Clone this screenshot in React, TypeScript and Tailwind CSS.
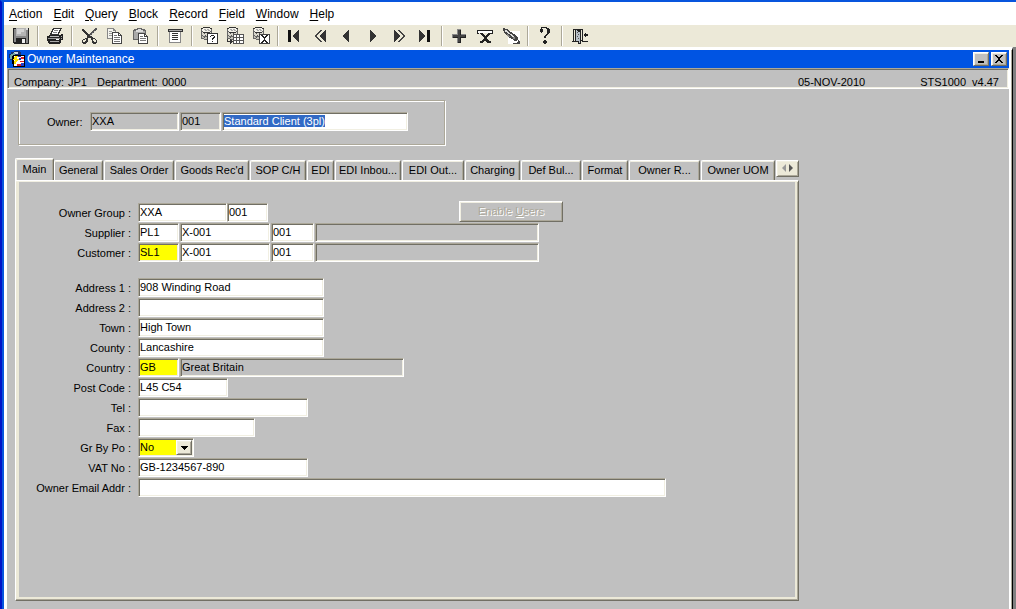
import { useEffect, useRef } from "react";
import type { ReactNode } from "react";
import clsx from "clsx";

const SUNKEN =
  "border border-t-[#aca899] border-l-[#aca899] border-r-white border-b-white shadow-[inset_1px_1px_0_#716f64,inset_-1px_-1px_0_#f1efe2]";
const RAISED =
  "border border-t-white border-l-white border-r-[#716f64] border-b-[#716f64] shadow-[inset_1px_1px_0_#f1efe2,inset_-1px_-1px_0_#aca899]";

const MENUS = ["Action", "Edit", "Query", "Block", "Record", "Field", "Window", "Help"];

const TABS = [
  { label: "General", width: "w-[49px]" },
  { label: "Sales Order", width: "w-[70px]" },
  { label: "Goods Rec'd", width: "w-[74px]" },
  { label: "SOP C/H", width: "w-[56px]" },
  { label: "EDI", width: "w-[27px]" },
  { label: "EDI Inbou...", width: "w-[66px]" },
  { label: "EDI Out...", width: "w-[62px]" },
  { label: "Charging", width: "w-[55px]" },
  { label: "Def Bul...", width: "w-[60px]" },
  { label: "Format", width: "w-[46px]" },
  { label: "Owner R...", width: "w-[71px]" },
  { label: "Owner UOM", width: "w-[74px]" },
];

function Icon({ children }: { children: ReactNode }) {
  return (
    <svg width="18" height="18" viewBox="0 0 18 18" shapeRendering="crispEdges" aria-hidden="true">
      {children}
    </svg>
  );
}

const database = (
  <>
    <path d="M3 0h7v1h2v11H10v1H4v-1H1V1h2z" fill="#666" />
    <path d="M3 1h7v1h1v2h-1v1H3V4H2V2h1z" fill="#f4f2ea" />
    <path d="M4 2h2v1H4zM7 2h2v1H7zM5 3h2v1H5zM8 3h2v1H8z" fill="#aaa" />
    <path d="M2 5h1v1h7V5h1v3h-1v1H3V8H2z" fill="#d8d6cc" />
    <path d="M2 9h1v1h7V9h1v2h-1v1H4v-1H2z" fill="#c4c2b8" />
    <path d="M4 6h1v1H4zM7 6h1v1H7zM9 7h1v1H9zM5 8h1v1H5zM4 10h1v1H4z" fill="#555" />
    <path d="M3 0h7v1H3zM1 1h2v1H1zM10 1h2v1h-2zM3 5h7v1H3z" fill="#333" />
  </>
);

const icons: Record<string, ReactNode> = {
  save: (
    <>
      <path d="M1 1h16v16H2v-1H1z" fill="#222" />
      <path d="M2 2h2v13H2zM14 3h2v13h-2z" fill="#888" />
      <path d="M4 9h10v2H4z" fill="#888" />
      <path d="M4 1h10v8H4z" fill="#b4b4b4" />
      <path d="M5 2h7v3H5zM5 5h4v2H5z" fill="#d4d4d4" />
      <path d="M14 1h2v2h-2z" fill="#ddd" />
      <path d="M4 11h10v5H4z" fill="#222" />
      <path d="M10 12h3v4h-3z" fill="#eee" />
    </>
  ),
  print: (
    <>
      <path d="M7 1h9v1h-1v2h-1v2h-1v2H4V6h1V4h1V2h1z" fill="#333" />
      <path d="M8 2h6v1h-1v2h-1v2H6V5h1V3h1z" fill="#fff" />
      <path d="M8 3h4v1H8zM7 5h4v1H7z" fill="#888" />
      <path d="M3 8h12V7h2v6h-2v3h-1v1H3v-1H2v-2H1V9h2z" fill="#222" />
      <path d="M4 9h9v1H4z" fill="#bbb" />
      <path d="M2 11h12v1H2z" fill="#999" />
      <path d="M4 14h9v1H4z" fill="#aaa" />
      <path d="M10 12h3v1h-3z" fill="#fff" />
      <path d="M15 9h1v1h-1zM15 11h1v1h-1z" fill="#aaa" />
    </>
  ),
  cut: (
    <>
      <path d="M15 1h2v2h-1v1h-1v1h-1v1h-1v1h-1v1h-1v1h-1v1H8V8h1V7h1V6h1V5h1V4h1V3h1V2h1z" fill="#555" />
      <path d="M14 4h1v1h-1zM12 6h1v1h-1zM10 8h1v1h-1z" fill="#ccc" />
      <path d="M2 2h2v1h1v1h1v1h1v1h1v1h1v1h1v1h2v1h1v1h2v1h1v1h1v3h-1v1h-3v-1h-1v-3h-1v-2H9V9H7V8H6V7H5V6H4V5H3V4H2z" fill="#333" />
      <path d="M13 12h2v1h1v2h-2v-1h-1z" fill="#ece9d8" />
      <path d="M7 9h2v2H8v4H7v1H6v1H3v-1H2v-3h1v-1h2v-1h2z" fill="#333" />
      <path d="M4 13h1v-1h1v2H5v1H3v-2h1z" fill="#ece9d8" />
    </>
  ),
  copy: (
    <>
      <path d="M1 1h7v1h1v1h1v9H1z" fill="#888" />
      <path d="M2 2h5v2h2v7H2z" fill="#f4f4ee" />
      <path d="M3 4h3v1H3zM3 6h4v1H3zM3 8h4v1H3z" fill="#999" />
      <path d="M6 5h7v1h1v1h1v1h1v9H6z" fill="#444" />
      <path d="M7 6h5v3h3v7H7z" fill="#fff" />
      <path d="M13 7h1v1h-1z" fill="#fff" />
      <path d="M8 8h3v1H8zM8 10h6v1H8zM8 12h6v1H8zM8 14h6v1H8z" fill="#777" />
    </>
  ),
  paste: (
    <>
      <path d="M5 1h5v1h3v1h1v10H1V3h1V2h3z" fill="#666" />
      <path d="M2 4h11v8H2z" fill="#aaa" />
      <path d="M4 3h7v2H4zM6 2h3v1H6z" fill="#ddd" />
      <path d="M6 6h7v1h1v1h1v1h1v8H6z" fill="#444" />
      <path d="M7 7h5v3h3v6H7z" fill="#fff" />
      <path d="M13 8h1v1h-1z" fill="#fff" />
      <path d="M8 9h3v1H8zM8 11h6v1H8zM8 13h6v1H8z" fill="#777" />
    </>
  ),
  list: (
    <>
      <path d="M2 2h15v3H2z" fill="#333" />
      <path d="M3 3h13v1H3z" fill="#aaa" />
      <path d="M3 5h12v11H3z" fill="#888" />
      <path d="M4 5h10v10H4z" fill="#fff" />
      <path d="M6 6h6v1H6zM6 8h6v1H6zM6 10h6v1H6zM6 12h6v1H6z" fill="#333" />
    </>
  ),
  enterQuery: (
    <>
      {database}
      <path d="M7 6h11v11H7z" fill="#333" />
      <path d="M8 7h9v9H8z" fill="#fff" />
      <path d="M11 8h3v1h1v2h-1v1h-1v1h-1v-2h1v-1h1V9h-3v1h-1V9h1zM12 14h1v1h-1z" fill="#222" />
    </>
  ),
  executeQuery: (
    <>
      {database}
      <path d="M7 7h11v10H7z" fill="#555" />
      <path d="M8 8h2v2H8zM11 8h2v2h-2zM14 8h3v2h-3zM8 11h2v2H8zM11 11h2v2h-2zM14 11h3v2h-3zM8 14h2v2H8zM11 14h2v2h-2zM14 14h3v2h-3z" fill="#fff" />
      <path d="M1 12h1v2h2v-2h1v1h1v1h1v1H6v1H5v1H4v-2H1z" fill="#333" />
    </>
  ),
  cancelQuery: (
    <>
      {database}
      <path d="M7 7h11v10H7z" fill="#444" />
      <path d="M8 8h9v8H8z" fill="#fff" />
      <path d="M9 8h2v1h1v1h1V9h1V8h2v1h-1v1h-1v1h-1v2h1v1h1v1h1v1h-2v-1h-1v-1h-1v1h-1v1H9v-1h1v-1h1v-1h1v-2h-1v-1h-1V9H9z" fill="#222" />
    </>
  ),
  first: (
    <>
      <path d="M2 3h3v12H2z" fill="#111" />
      <path d="M12 3h1v12h-1v-1h-1v-1h-1v-1H9v-1H8v-1H7V8h1V7h1V6h1V5h1V4h1z" fill="#333" />
    </>
  ),
  previousSet: (
    <>
      <path d="M8 3h2v1H9v1H8v1H7v1H6v1H5v2h1v1h1v1h1v1h1v1h1v1H8v-1H7v-1H6v-1H5v-1H4v-1H3V8h1V7h1V6h1V5h1V4h1z" fill="#444" />
      <path d="M13 3h1v12h-1v-1h-1v-1h-1v-1h-1v-1H9v-1H8V8h1V7h1V6h1V5h1V4h1z" fill="#333" />
    </>
  ),
  previous: <path d="M10 3h1v12h-1v-1H9v-1H8v-1H7v-1H6v-1H5V8h1V7h1V6h1V5h1V4h1z" fill="#333" />,
  next: <path d="M6 3h1v1h1v1h1v1h1v1h1v1h1v2h-1v1h-1v1H9v1H8v1H7v1H6z" fill="#333" />,
  nextSet: (
    <>
      <path d="M4 3h1v1h1v1h1v1h1v1h1v1h1v2H9v1H8v1H7v1H6v1H5v1H4z" fill="#333" />
      <path d="M8 3h2v1h1v1h1v1h1v1h1v1h1v2h-1v1h-1v1h-1v1h-1v1h-1v1H8v-1h1v-1h1v-1h1v-1h1v-1h1V8h-1V7h-1V6h-1V5H9V4H8z" fill="#444" />
    </>
  ),
  last: (
    <>
      <path d="M11 3h3v12h-3z" fill="#111" />
      <path d="M3 3h1v1h1v1h1v1h1v1h1v1h1v2H8v1H7v1H6v1H5v1H4v1H3z" fill="#333" />
    </>
  ),
  insert: (
    <>
      <path d="M7 2h4v5h5v4h-5v5H7v-5H2V7h5z" fill="#888" />
      <path d="M8 3h3v5h5v3h-5v5H8v-5H3V8h5z" fill="#222" />
      <path d="M8 3h2v5h5v2h-5v5H8v-5H3V8h5z" fill="#444" />
    </>
  ),
  remove: (
    <>
      <path d="M1 3h16v4h-2V5H3v2H1z" fill="#222" />
      <path d="M2 4h14v2H2z" fill="#fff" />
      <path d="M4 6h3v1h1v1h1v1h1V8h1V7h1V6h3v1h-1v1h-1v1h-1v1h-1v2h1v1h1v1h2v2h-4v-1h-1v-1h-1v-1H9v1H8v1H7v1H4v-2h2v-1h1v-1h1v-2H7V9H6V8H5V7H4z" fill="#222" />
    </>
  ),
  lock: (
    <>
      <path d="M6 4h12v13H6z" fill="#fff" />
      <path d="M1 1h2v1h3v1h1v1h1v1h2v1h1v1h2v1h1v1h1v1h1v3h-1v1h-3v-1h-1v-1H9v-1H7v-1H6V9H5V8H4V7H3V6H2V4H1z" fill="#444" />
      <path d="M3 3h2v1h1v1h1v1h1v1H6V6H5V5H3zM8 7h2v1h1v1h1v1h-2V9H9V8H8z" fill="#ddd" />
      <path d="M5 7h1v1h1v1h1v1H6V9H5zM11 10h2v2h-2z" fill="#888" />
      <path d="M16 13h1v1h1v3h-7v-1h4v-1h1z" fill="#444" />
    </>
  ),
  help: (
    <>
      <path d="M5 0h6v1h2v1h1v4h-1v1h-1v1h-1v1h-1v2H8V9h1V8h1V7h1V2h-1V1H6v1h1v3H6v1H5V5H4V2h1z" fill="#222" />
      <path d="M8 13h2v1h1v2h-1v1H8v-1H7v-2h1z" fill="#222" />
    </>
  ),
  exit: (
    <>
      <path d="M3 2h10v12h5v1h-6v-1h-1v3H8v-2H2v-1h1z" fill="#222" />
      <path d="M4 3h1v11H4zM11 3h1v10h-1z" fill="#ece9d8" />
      <path d="M6 3h1v1h1v1h2v11H9v-2H6z" fill="#b8c0c8" />
      <path d="M7 5h1v1H7zM8 7h1v1H8zM7 9h1v1H7zM8 11h1v1H8z" fill="#555" />
      <path d="M15 6h1v1h2v2h-2v1h-1V9h-1V7h1z" fill="#222" />
    </>
  ),
};

const TOOLBAR = [
  ["save"],
  ["print"],
  ["cut", "copy", "paste"],
  ["list"],
  ["enterQuery", "executeQuery", "cancelQuery"],
  ["first", "previousSet", "previous", "next", "nextSet", "last"],
  ["insert", "remove", "lock"],
  ["help"],
  ["exit"],
];

function MenuBar() {
  return (
    <nav className="flex h-[23px] items-center gap-[11px] bg-white pl-[5px] text-xs">
      {MENUS.map((menu) => (
        <button key={menu} type="button">
          <span className="underline underline-offset-2">{menu[0]}</span>
          {menu.slice(1)}
        </button>
      ))}
    </nav>
  );
}

function Toolbar() {
  return (
    <div className="flex h-[22px] bg-[#ece9d8] pl-1">
      {TOOLBAR.map((group, i) => (
        <div key={group[0]} className="flex items-center">
          {i > 0 && <span className="mx-[3px] h-5 w-[2px] border-l border-[#aca899] bg-white" />}
          {group.map((name) => (
            <button key={name} type="button" aria-label={name} className="flex h-5 w-[26px] items-center justify-center">
              <Icon>{icons[name]}</Icon>
            </button>
          ))}
        </div>
      ))}
    </div>
  );
}

function TitleBar() {
  const button = clsx(RAISED, "flex h-[14px] w-4 items-center justify-center bg-[#c0c0c0]");
  return (
    <div className="flex h-[18px] items-center bg-[#0054e3] pr-[2px] pl-[2px] text-xs text-white">
      <svg width="16" height="16" viewBox="0 0 16 16" shapeRendering="crispEdges" aria-hidden="true">
        <path d="M2 1h3V0h6v1h1v8H8v2H3V9H1V7H0V3h2z" fill="#183070" />
        <path d="M2 3h2V2h2v2H5v2H3v2H1V4h1z" fill="#70a8a0" />
        <path d="M5 1h4v2H6z" fill="#c8d8e8" />
        <path d="M3 5h1V4h12v12H4v-3H3z" fill="#000" />
        <path d="M5 5h10v10H5z" fill="#fff" />
        <path d="M9 5h3v1H9zM10 7h2v2h-2z" fill="#2030c0" />
        <path d="M12 6h3v2h-3zM11 10h4v1h-4zM8 13h4v2H8z" fill="#e02020" />
        <path d="M12 12h3v3h-3z" fill="#2040d0" />
        <path d="M6 5h3v1H8v2h2v1H9v1H8v1H7v2H5v-3h1V9H4V8h1V6h1z" fill="#ffe000" />
      </svg>
      <h1 className="ml-[2px] flex-1">Owner Maintenance</h1>
      <div className="flex gap-[2px]">
        <button type="button" aria-label="Minimize" className={button}>
          <svg width="12" height="10" viewBox="0 0 12 10" shapeRendering="crispEdges">
            <path d="M3 7h6v2H3z" />
          </svg>
        </button>
        <button type="button" aria-label="Close" className={button}>
          <svg width="12" height="10" viewBox="0 0 12 10" shapeRendering="crispEdges">
            <path d="M2 1h2v1h1v1h2V2h1V1h2v1H9v1H8v1H7v2h1v1h1v1h1v1H8V8H7V7H5v1H4v1H2V8h1V7h1V6h1V4H4V3H3V2H2z" />
          </svg>
        </button>
      </div>
    </div>
  );
}

function StatusBar() {
  return (
    <div className={clsx(SUNKEN, "flex h-[21px] items-end overflow-hidden pr-[9px] pl-[6px] leading-[12px]")}>
      <span className="w-[54px]">Company:</span>
      <span className="w-[29px]">JP1</span>
      <span className="w-[65px]">Department:</span>
      <span>0000</span>
      <span className="mr-[55px] ml-auto">05-NOV-2010</span>
      <span className="mr-[6px]">STS1000</span>
      <span>v4.47</span>
    </div>
  );
}

type FieldProps = {
  id?: string;
  label?: string;
  value?: string;
  width: string;
  tone?: "white" | "gray" | "yellow";
};

function Field({ id, label, value = "", width, tone = "white" }: FieldProps) {
  return (
    <input
      id={id}
      aria-label={label}
      type="text"
      defaultValue={value}
      readOnly={tone === "gray"}
      className={clsx(
        SUNKEN,
        "h-[19px] shrink-0 pb-[1px] pl-[1px] outline-none",
        tone === "white" && "bg-white",
        tone === "gray" && "bg-[#c0c0c0]",
        tone === "yellow" && "bg-[#ffff00]",
        width
      )}
    />
  );
}

function Row({ id, label, children }: { id: string; label: string; children: ReactNode }) {
  return (
    <div className="flex items-end">
      <label htmlFor={id} className="mr-[7px] w-[112px] shrink-0 text-right leading-[18px]">
        {label} :
      </label>
      {children}
    </div>
  );
}

function OwnerHeader() {
  const nameRef = useRef<HTMLInputElement>(null);

  useEffect(() => {
    nameRef.current?.focus();
    nameRef.current?.select();
  }, []);

  return (
    <div className="ml-[11px] flex h-[45px] w-[427px] items-start border border-[#aca899] pt-[11px] pl-[28px] shadow-[1px_1px_0_#fff,inset_1px_1px_0_#fff]">
      <label htmlFor="owner" className="w-[43px] leading-[20px]">
        Owner:
      </label>
      <div className="flex gap-px">
        <Field id="owner" value="XXA" width="w-[89px]" tone="gray" />
        <Field label="Owner suffix" value="001" width="w-[41px]" tone="gray" />
        <input
          ref={nameRef}
          aria-label="Owner name"
          type="text"
          defaultValue="Standard Client (3pl)"
          className={clsx(
            SUNKEN,
            "h-[19px] w-[186px] bg-white pb-[1px] pl-[1px] leading-[15px] outline-none selection:bg-[#316ac5] selection:text-white"
          )}
        />
      </div>
    </div>
  );
}

function TabStrip() {
  return (
    <div role="tablist" className="flex items-end">
      <button
        type="button"
        role="tab"
        aria-selected="true"
        className="h-[22px] w-[39px] rounded-t-[2px] border-t border-r border-l border-t-white border-r-[#716f64] border-l-white pb-[1px] shadow-[inset_1px_1px_0_#f1efe2,inset_-1px_0_0_#aca899]"
      >
        Main
      </button>
      {TABS.map((tab) => (
        <button
          key={tab.label}
          type="button"
          role="tab"
          aria-selected="false"
          className={clsx(
            "mr-px h-5 rounded-t-[2px] border-t border-r border-l border-t-white border-r-[#716f64] border-l-white whitespace-nowrap shadow-[inset_0_1px_0_#f1efe2,inset_-1px_0_0_#aca899]",
            tab.width
          )}
        >
          {tab.label}
        </button>
      ))}
      <button
        type="button"
        aria-label="Scroll tabs"
        className={clsx(RAISED, "mb-[3px] flex h-[17px] w-[23px] items-center justify-center bg-[#ece9d8]")}
      >
        <svg width="13" height="9" viewBox="0 0 13 9" aria-hidden="true">
          <path d="M5 0v8L1 4z" fill="#999" />
          <path d="M8 0v8l4-4z" fill="#555" />
        </svg>
      </button>
    </div>
  );
}

function MainPanel() {
  return (
    <div
      role="tabpanel"
      className="h-[421px] border border-t-white border-r-[#716f64] border-b-[#716f64] border-l-white pt-[20px] pl-[3px] shadow-[inset_0_1px_0_#f1efe2,inset_-1px_-1px_0_#aca899,inset_3px_0_0_#ece9d8,inset_-3px_-3px_0_#ece9d8]"
    >
      <div className="flex flex-col gap-px">
        <Row id="group" label="Owner Group">
          <Field id="group" value="XXA" width="w-[89px]" />
          <Field label="Owner group suffix" value="001" width="w-[41px]" />
          <button
            type="button"
            disabled
            className={clsx(RAISED, "ml-[191px] h-[21px] w-[104px] text-[#aca899] [text-shadow:1px_1px_0_#fff]")}
          >
            Enable <span className="underline">U</span>sers
          </button>
        </Row>
        <Row id="supplier" label="Supplier">
          <div className="flex gap-px">
            <Field id="supplier" value="PL1" width="w-[41px]" />
            <Field label="Supplier code" value="X-001" width="w-[90px]" />
            <Field label="Supplier suffix" value="001" width="w-[43px]" />
            <Field label="Supplier name" width="w-[224px]" tone="gray" />
          </div>
        </Row>
        <Row id="customer" label="Customer">
          <div className="flex gap-px">
            <Field id="customer" value="SL1" width="w-[41px]" tone="yellow" />
            <Field label="Customer code" value="X-001" width="w-[90px]" />
            <Field label="Customer suffix" value="001" width="w-[43px]" />
            <Field label="Customer name" width="w-[224px]" tone="gray" />
          </div>
        </Row>
      </div>

      <div className="mt-4 flex flex-col gap-px">
        <Row id="address1" label="Address 1">
          <Field id="address1" value="908 Winding Road" width="w-[186px]" />
        </Row>
        <Row id="address2" label="Address 2">
          <Field id="address2" width="w-[186px]" />
        </Row>
        <Row id="town" label="Town">
          <Field id="town" value="High Town" width="w-[186px]" />
        </Row>
        <Row id="county" label="County">
          <Field id="county" value="Lancashire" width="w-[186px]" />
        </Row>
        <Row id="country" label="Country">
          <div className="flex gap-px">
            <Field id="country" value="GB" width="w-[41px]" tone="yellow" />
            <Field label="Country name" value="Great Britain" width="w-[224px]" tone="gray" />
          </div>
        </Row>
        <Row id="postcode" label="Post Code">
          <Field id="postcode" value="L45 C54" width="w-[90px]" />
        </Row>
        <Row id="tel" label="Tel">
          <Field id="tel" width="w-[170px]" />
        </Row>
        <Row id="fax" label="Fax">
          <Field id="fax" width="w-[117px]" />
        </Row>
        <Row id="grByPo" label="Gr By Po">
          <div className="relative h-[19px] w-[56px]">
            <select
              id="grByPo"
              defaultValue="No"
              className={clsx(SUNKEN, "block h-[19px] w-full appearance-none bg-[#ffff00] pl-[1px] outline-none")}
            >
              <option>No</option>
              <option>Yes</option>
            </select>
            <span
              className={clsx(
                RAISED,
                "pointer-events-none absolute top-[2px] right-[2px] flex h-[15px] w-4 items-center justify-center bg-[#ece9d8]"
              )}
            >
              <svg width="7" height="4" viewBox="0 0 7 4" shapeRendering="crispEdges">
                <path d="M0 0h7v1H6v1H5v1H4v1H3V3H2V2H1V1H0z" />
              </svg>
            </span>
          </div>
        </Row>
        <Row id="vat" label="VAT No">
          <Field id="vat" value="GB-1234567-890" width="w-[170px]" />
        </Row>
        <Row id="email" label="Owner Email Addr">
          <Field id="email" width="w-[528px]" />
        </Row>
      </div>
    </div>
  );
}

export default function App() {
  return (
    <div className="flex min-h-screen flex-col overflow-hidden border-t-2 border-l-2 border-t-[#0855dd] border-l-[#0013c8] bg-white font-['Liberation_Sans',Arial,sans-serif] text-[11px] text-black">
      <div className="flex flex-1 flex-col border-l-2 border-[#0855dd]">
        <MenuBar />
        <Toolbar />
        <div className="flex flex-1 bg-[#808080] pr-[3px]">
          <main className="flex flex-1 flex-col border-t-[3px] border-r border-l-[3px] border-white border-r-black bg-[#c0c0c0]">
            <div className="flex-1 border-r border-[#aca899]">
              <div className="h-full border-r-2 border-white">
                <TitleBar />
                <StatusBar />
                <div className="pt-[11px]">
                  <OwnerHeader />
                  <div className="mt-[13px] ml-2 w-full max-w-[784px]">
                    <TabStrip />
                    <MainPanel />
                  </div>
                </div>
              </div>
            </div>
          </main>
        </div>
      </div>
    </div>
  );
}
